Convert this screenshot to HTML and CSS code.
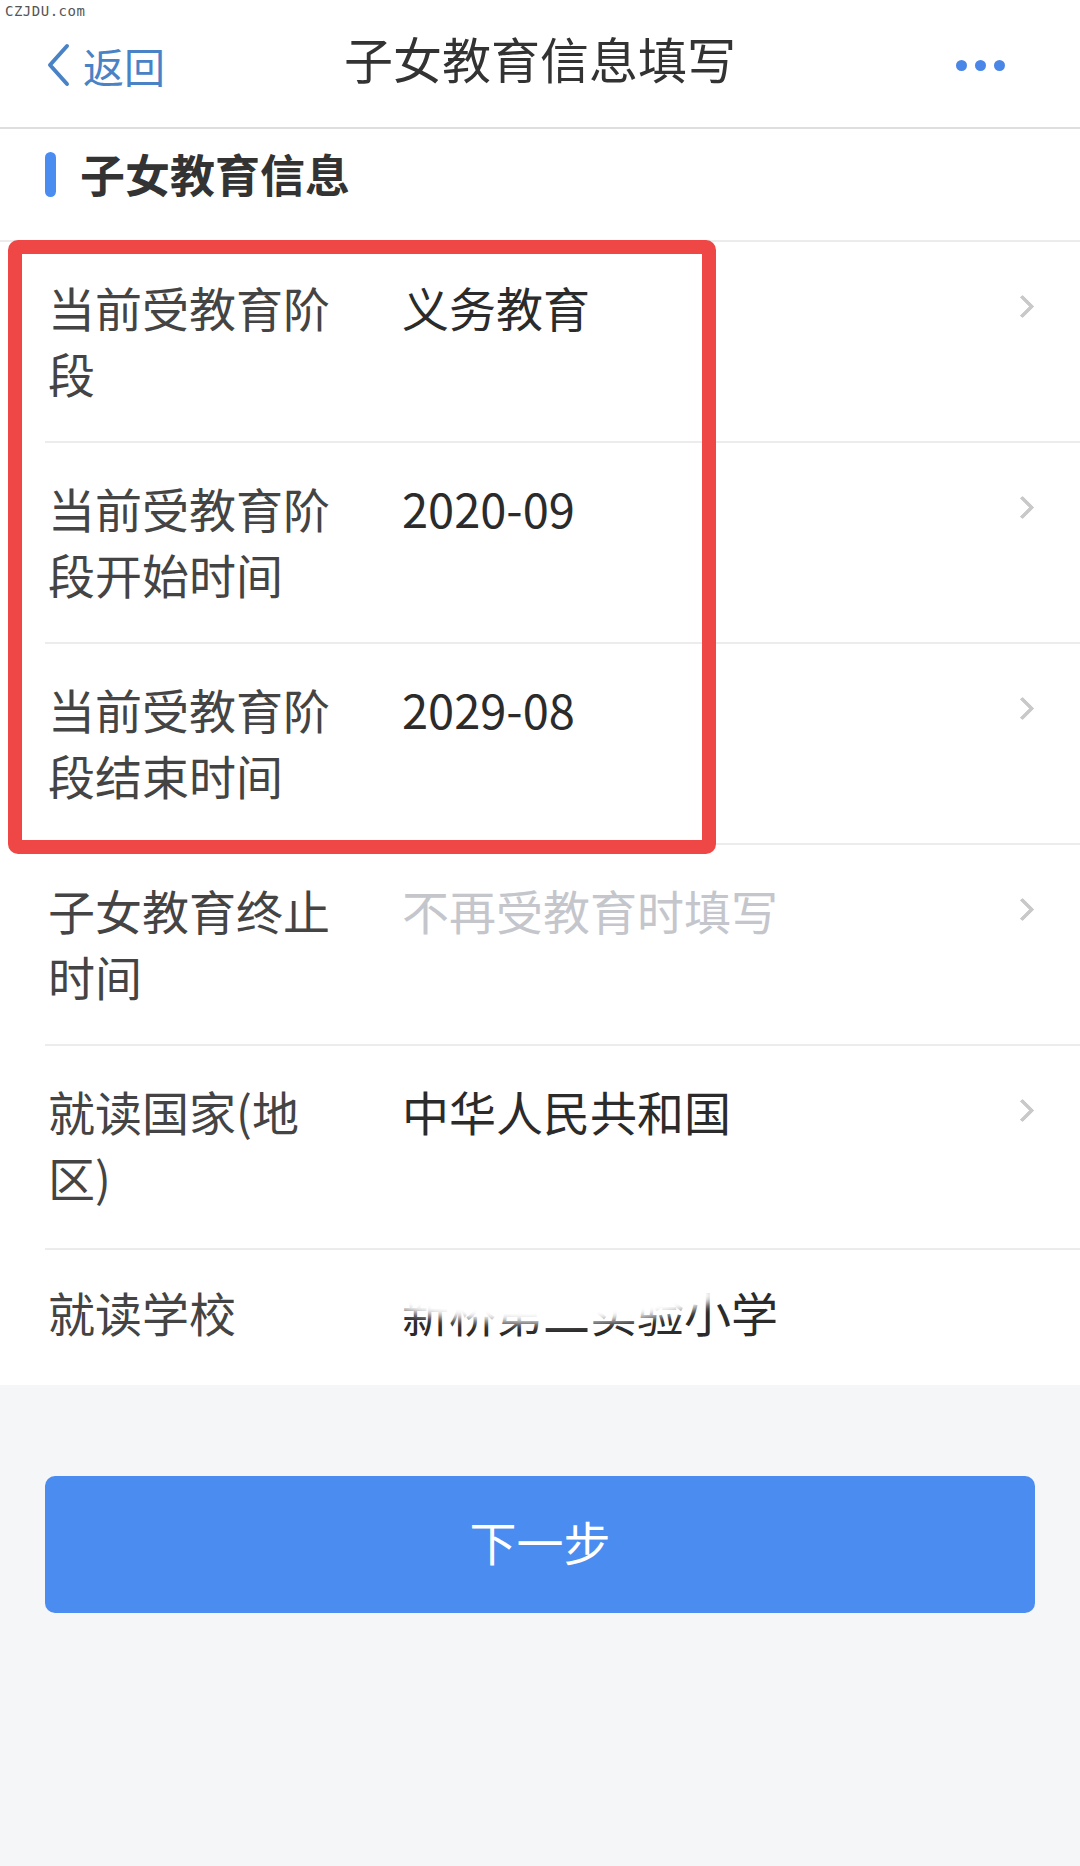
FILE: index.html
```html
<!DOCTYPE html>
<html lang="zh-CN">
<head>
    <meta charset="UTF-8">
    <meta name="viewport" content="width=device-width, initial-scale=1.0">
    <title>子女教育信息填写</title>
    <link rel="stylesheet" href="styles.css">
</head>
<body>
    <div class="page">
        <div class="watermark">CZJDU.com</div>

        <div class="topbar">
            <a class="back" href="#">
                <svg class="back-icon" viewBox="0 0 26 44" width="26" height="44">
                    <path d="M22 3 L5 22 L22 41" fill="none" stroke="#4a82c6" stroke-width="4" stroke-linecap="round" stroke-linejoin="round"/>
                </svg>
                <span>返回</span>
            </a>
            <div class="title">子女教育信息填写</div>
            <div class="more">
                <span class="dot"></span><span class="dot"></span><span class="dot"></span>
            </div>
        </div>

        <div class="section-head">
            <span class="bar"></span>
            <span class="section-title">子女教育信息</span>
        </div>

        <div class="form">
            <div class="row">
                <div class="label">当前受教育阶段</div>
                <div class="value">义务教育</div>
                <div class="arrow"></div>
            </div>
            <div class="row">
                <div class="label">当前受教育阶段开始时间</div>
                <div class="value">2020-09</div>
                <div class="arrow"></div>
            </div>
            <div class="row">
                <div class="label">当前受教育阶段结束时间</div>
                <div class="value">2029-08</div>
                <div class="arrow"></div>
            </div>
            <div class="row">
                <div class="label">子女教育终止时间</div>
                <div class="value placeholder">不再受教育时填写</div>
                <div class="arrow"></div>
            </div>
            <div class="row tall">
                <div class="label">就读国家(地区)</div>
                <div class="value">中华人民共和国</div>
                <div class="arrow"></div>
            </div>
            <div class="row last">
                <div class="label">就读学校</div>
                <div class="value school">新桥第二实验小学<span class="smudge"></span></div>
            </div>

            <!-- highlight frame drawn over the first three rows -->
            <div class="highlight"></div>
        </div>

        <div class="footer">
            <button class="next-btn">下一步</button>
        </div>
    </div>
</body>
</html>
```

FILE: styles.css
```css
body {
    margin: 0;
    padding: 0;
    background: #f4f6f8;
    font-family: "Noto Sans CJK SC", "Noto Sans", sans-serif;
    color: #333;
}
.page {
    position: relative;
    width: 1080px;
    min-height: 1866px;
    background: #f4f6f8;
}
.watermark {
    position: absolute;
    left: 5px;
    top: 3px;
    font-family: "DejaVu Sans Mono", monospace;
    font-size: 14px;
    color: #555;
    letter-spacing: 0.5px;
}

/* top navigation */
.topbar {
    display: grid;
    grid-template-columns: 1fr auto 1fr;
    align-items: center;
    height: 127px;
    padding: 0 45px;
    background: #fff;
    border-bottom: 2px solid #dedede;
}
.back {
    display: flex;
    align-items: center;
    gap: 12px;
    color: #4a82c6;
    text-decoration: none;
    font-size: 41px;
    padding-top: 2px;
}
.back-icon {
    display: block;
}
.title {
    font-size: 49px;
    color: #333;
    padding-bottom: 13px;
}
.more {
    display: flex;
    justify-content: flex-end;
    gap: 8px;
    padding-right: 30px;
    padding-top: 4px;
}
.dot {
    width: 11px;
    height: 11px;
    border-radius: 50%;
    background: #4a86e8;
}

/* section header */
.section-head {
    display: flex;
    align-items: center;
    gap: 24px;
    padding: 17px 45px 38px;
    background: #fff;
    border-bottom: 2px solid #ececec;
}
.bar {
    width: 11px;
    height: 45px;
    border-radius: 6px;
    background: #4a8cf0;
}
.section-title {
    font-size: 45px;
    font-weight: bold;
    line-height: 56px;
    color: #333;
}

/* form rows */
.form {
    position: relative;
    background: #fff;
}
.row {
    display: flex;
    align-items: flex-start;
    margin-left: 45px;
    padding: 32px 48px 35px 3px;
    border-bottom: 2px solid #ececec;
    font-size: 47px;
    line-height: 66px;
}
.row.tall {
    padding-bottom: 38px;
}
.row.last {
    border-bottom: none;
    padding-top: 29px;
    padding-bottom: 40px;
}
.label {
    flex: 0 0 296px;
    margin-right: 58px;
    color: #444;
}
.value {
    flex: 1;
    color: #2b2b2b;
}
.value.placeholder {
    color: #c4c6cc;
}
.school {
    position: relative;
}
.smudge {
    position: absolute;
    left: -30px;
    top: -12px;
    width: 345px;
    height: 56px;
    border-radius: 50%;
    background: #fff;
    filter: blur(4px);
}
.arrow {
    flex: 0 0 15px;
    height: 24px;
    margin-top: 20px;
    position: relative;
}
.arrow::before {
    content: "";
    position: absolute;
    left: -3px;
    top: 4px;
    width: 13px;
    height: 13px;
    border-right: 4px solid #c9c9c9;
    border-top: 4px solid #c9c9c9;
    transform: rotate(45deg);
    border-radius: 2px;
}
.highlight {
    position: absolute;
    left: 8px;
    top: -2px;
    width: 680px;
    height: 586px;
    border: 14px solid #ef4646;
    border-radius: 10px;
    pointer-events: none;
}

/* footer button */
.footer {
    padding: 91px 45px 0;
}
.next-btn {
    display: block;
    width: 100%;
    height: 137px;
    padding-bottom: 10px;
    border: none;
    border-radius: 10px;
    background: #4a8cf0;
    color: #fff;
    font-family: "Noto Sans CJK SC", sans-serif;
    font-size: 47px;
    cursor: pointer;
}
```
